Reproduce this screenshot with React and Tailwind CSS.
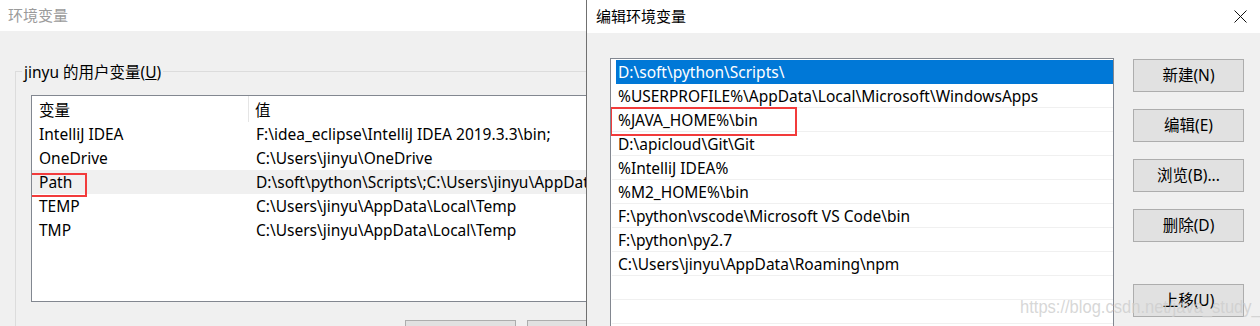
import React from "react";

const font = { fontFamily: '"Noto Sans", "Noto Sans CJK SC", sans-serif' };

const userVars = [
  ["IntelliJ IDEA", "F:\\idea_eclipse\\IntelliJ IDEA 2019.3.3\\bin;"],
  ["OneDrive", "C:\\Users\\jinyu\\OneDrive"],
  ["Path", "D:\\soft\\python\\Scripts\\;C:\\Users\\jinyu\\AppData\\Local\\Microsoft\\WindowsApps;"],
  ["TEMP", "C:\\Users\\jinyu\\AppData\\Local\\Temp"],
  ["TMP", "C:\\Users\\jinyu\\AppData\\Local\\Temp"],
];

const paths = [
  "D:\\soft\\python\\Scripts\\",
  "%USERPROFILE%\\AppData\\Local\\Microsoft\\WindowsApps",
  "%JAVA_HOME%\\bin",
  "D:\\apicloud\\Git\\Git",
  "%IntelliJ IDEA%",
  "%M2_HOME%\\bin",
  "F:\\python\\vscode\\Microsoft VS Code\\bin",
  "F:\\python\\py2.7",
  "C:\\Users\\jinyu\\AppData\\Roaming\\npm",
  "",
  "",
];

function Btn({ children, className = "" }) {
  return (
    <div
      className={
        "w-[111px] h-[33px] shrink-0 bg-[#e1e1e1] border border-[#adadad] flex items-center justify-center pt-[1px] text-[15.5px] text-black " +
        className
      }
    >
      {children}
    </div>
  );
}

export default function App() {
  return (
    <div
      className="relative flex w-[1260px] h-[326px] overflow-hidden bg-[#f0f0f0] text-black leading-none"
      style={font}
    >
      {/* Left window */}
      <div className="w-[586px] shrink-0 flex flex-col overflow-hidden">
        <div className="h-[31px] shrink-0 bg-white pl-[8px] flex items-center text-[15px] text-[#9b9b9b]">
          环境变量
        </div>
        <div className="flex-1 bg-[#f0f0f0] pt-[40px] pl-[15px]">
          <div className="relative w-[800px] h-[400px] border-l border-t border-[#dcdcdc] pl-[15px] pt-[23px]">
            <div className="absolute left-[6px] -top-[10px] bg-[#f0f0f0] px-[2px] text-[15.5px] leading-[20px] whitespace-nowrap">
              jinyu 的用户变量(<span className="underline">U</span>)
            </div>
            <div className="w-[760px] h-[207px] border border-[#828790] bg-white overflow-hidden">
              <div className="flex h-[26px] items-center text-[15.5px]">
                <div className="w-[217px] h-full flex items-center pt-[3px] pl-[7px] border-r border-[#e5e5e5]">变量</div>
                <div className="pl-[6px] pt-[3px]">值</div>
              </div>
              {userVars.map(([k, v]) => (
                <div
                  key={k}
                  className={
                    "relative flex h-[24px] items-center pt-[2px] text-[15.5px] whitespace-nowrap " +
                    (k === "Path" ? "bg-[#f0f0f0]" : "")
                  }
                >
                  <div className="w-[218px] shrink-0 pl-[7px]">{k}</div>
                  <div className="pl-[6px]">{v}</div>
                  {k === "Path" && (
                    <div className="absolute left-[-9px] top-[3px] w-[64px] h-[24px] border-2 border-[#f23b3b]" />
                  )}
                </div>
              ))}
            </div>
            <div className="flex gap-[11px] pl-[374px] mt-[18px]">
              <Btn />
              <Btn />
            </div>
          </div>
        </div>
      </div>

      {/* Right window */}
      <div className="flex-1 flex flex-col border-l border-[#707070] bg-[#f0f0f0]">
        <div className="h-[33px] shrink-0 bg-white flex items-center justify-between pl-[9px] pr-[13px]">
          <span className="text-[15px]">编辑环境变量</span>
          <svg width="13" height="13" viewBox="0 0 13 13" className="text-[#111]">
            <path d="M0.5 0.5 L12.5 12.5 M12.5 0.5 L0.5 12.5" stroke="currentColor" strokeWidth="1" fill="none" />
          </svg>
        </div>
        <div className="flex-1 flex pl-[23px] pt-[25px] gap-[19px]">
          <div className="w-[504px] h-[300px] shrink-0 border border-[#828790] bg-white pt-[1px] overflow-hidden">
            {paths.map((p, i) =>
              i === 0 ? (
                <div
                  key={i}
                  className="h-[24px] flex items-center pt-[2px] text-[15.5px] whitespace-nowrap bg-[#0078d7] text-white ml-[5px] pl-[2px]"
                >
                  {p}
                </div>
              ) : (
                <div
                  key={i}
                  className="relative h-[24px] flex items-center pt-[2px] text-[15.5px] whitespace-nowrap border-b border-[#f0f0f0] ml-[1px] pl-[6px]"
                >
                  {p}
                  {i === 2 && (
                    <div className="absolute left-[-2px] top-[-1px] w-[187px] h-[29px] border-2 border-[#f23b3b]" />
                  )}
                </div>
              )
            )}
          </div>
          <div className="flex flex-col pt-[1px]">
            <Btn>新建(N)</Btn>
            <Btn className="mt-[17px]">编辑(E)</Btn>
            <Btn className="mt-[17px]">浏览(B)...</Btn>
            <Btn className="mt-[17px]">删除(D)</Btn>
            <Btn className="mt-[42px]">上移(U)</Btn>
          </div>
        </div>
      </div>

      {/* watermark */}
      <div
        className="absolute left-[1020px] top-[297px] text-[19px] leading-none whitespace-nowrap text-[rgba(205,205,205,0.8)] origin-left scale-x-[0.87]"
        style={{ fontFamily: '"Liberation Sans", Arial, sans-serif' }}
      >
        https://blog.csdn.net/java_study_
      </div>
    </div>
  );
}
